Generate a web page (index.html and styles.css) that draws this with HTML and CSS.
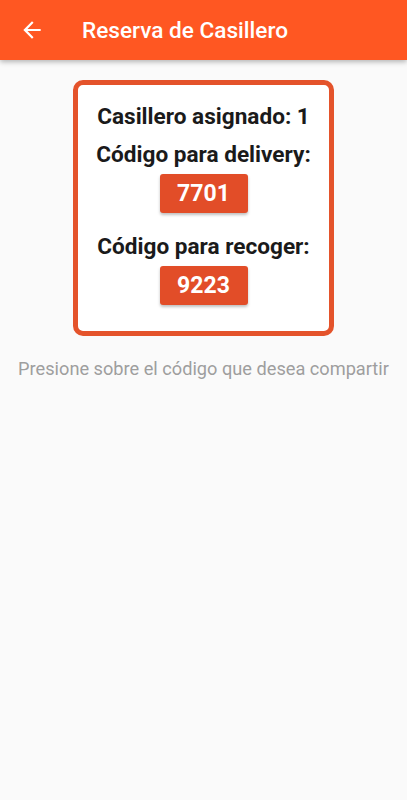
FILE: index.html
```html
<!DOCTYPE html>
<html lang="es">
<head>
    <meta charset="UTF-8">
    <meta name="viewport" content="width=device-width, initial-scale=1.0">
    <title>Reserva de Casillero</title>
    <link rel="stylesheet" href="styles.css">
</head>
<body>

    <!-- App Bar -->
    <header class="appbar">
        <button class="back-btn" aria-label="Volver">
            <svg viewBox="0 0 24 24" width="26" height="26">
                <path fill="#fff" d="M20 11H7.83l5.59-5.59L12 4l-8 8 8 8 1.41-1.41L7.83 13H20v-2z"/>
            </svg>
        </button>
        <h1 class="appbar-title">Reserva de Casillero</h1>
    </header>

    <!-- Locker Card -->
    <main class="content">
        <div class="card">
            <p class="label first">Casillero asignado: 1</p>
            <p class="label">Código para delivery:</p>
            <button class="code-btn">7701</button>
            <p class="label spaced">Código para recoger:</p>
            <button class="code-btn">9223</button>
        </div>
        <p class="hint">Presione sobre el código que desea compartir</p>
    </main>

</body>
</html>
```

FILE: styles.css
```css
/* Global Styles */
body {
    font-family: Roboto, 'Noto Sans', sans-serif;
    margin: 0;
    padding: 0;
    background: #fafafa;
    min-height: 100vh;
}

/* App Bar */
.appbar {
    height: 60px;
    background: #ff5722;
    display: flex;
    align-items: center;
    box-shadow: 0 2px 5px rgba(0, 0, 0, 0.28);
}

.back-btn {
    border: none;
    background: none;
    padding: 0;
    margin-left: 19px;
    width: 26px;
    height: 26px;
    display: flex;
}

.appbar-title {
    margin: 0 0 0 37px;
    font-size: 22.6px;
    font-weight: 500;
    color: #fff;
}

/* Content */
.content {
    display: flex;
    flex-direction: column;
    align-items: center;
    padding-top: 20px;
}

.card {
    width: 251px;
    background: #fff;
    border: 5px solid #e4532b;
    border-radius: 10px;
    display: flex;
    flex-direction: column;
    align-items: center;
    padding: 18px 0 26px;
}

.label {
    margin: 10px 0 0;
    font-size: 22.6px;
    line-height: 28px;
    font-weight: 700;
    color: #1a1a1a;
    white-space: nowrap;
}

.label.first {
    margin-top: 0;
}

.label.spaced {
    margin-top: 20px;
}

/* Code Buttons */
.code-btn {
    margin-top: 5px;
    width: 88px;
    height: 39px;
    border: none;
    border-radius: 3px;
    background: #e24d28;
    color: #fff;
    font-family: Roboto, sans-serif;
    font-size: 23px;
    font-weight: 700;
    box-shadow: 0 2px 3px rgba(0, 0, 0, 0.25);
    cursor: pointer;
}

.hint {
    margin: 21px 0 0;
    font-size: 18.2px;
    line-height: 24px;
    color: #9e9e9e;
    white-space: nowrap;
}
```
